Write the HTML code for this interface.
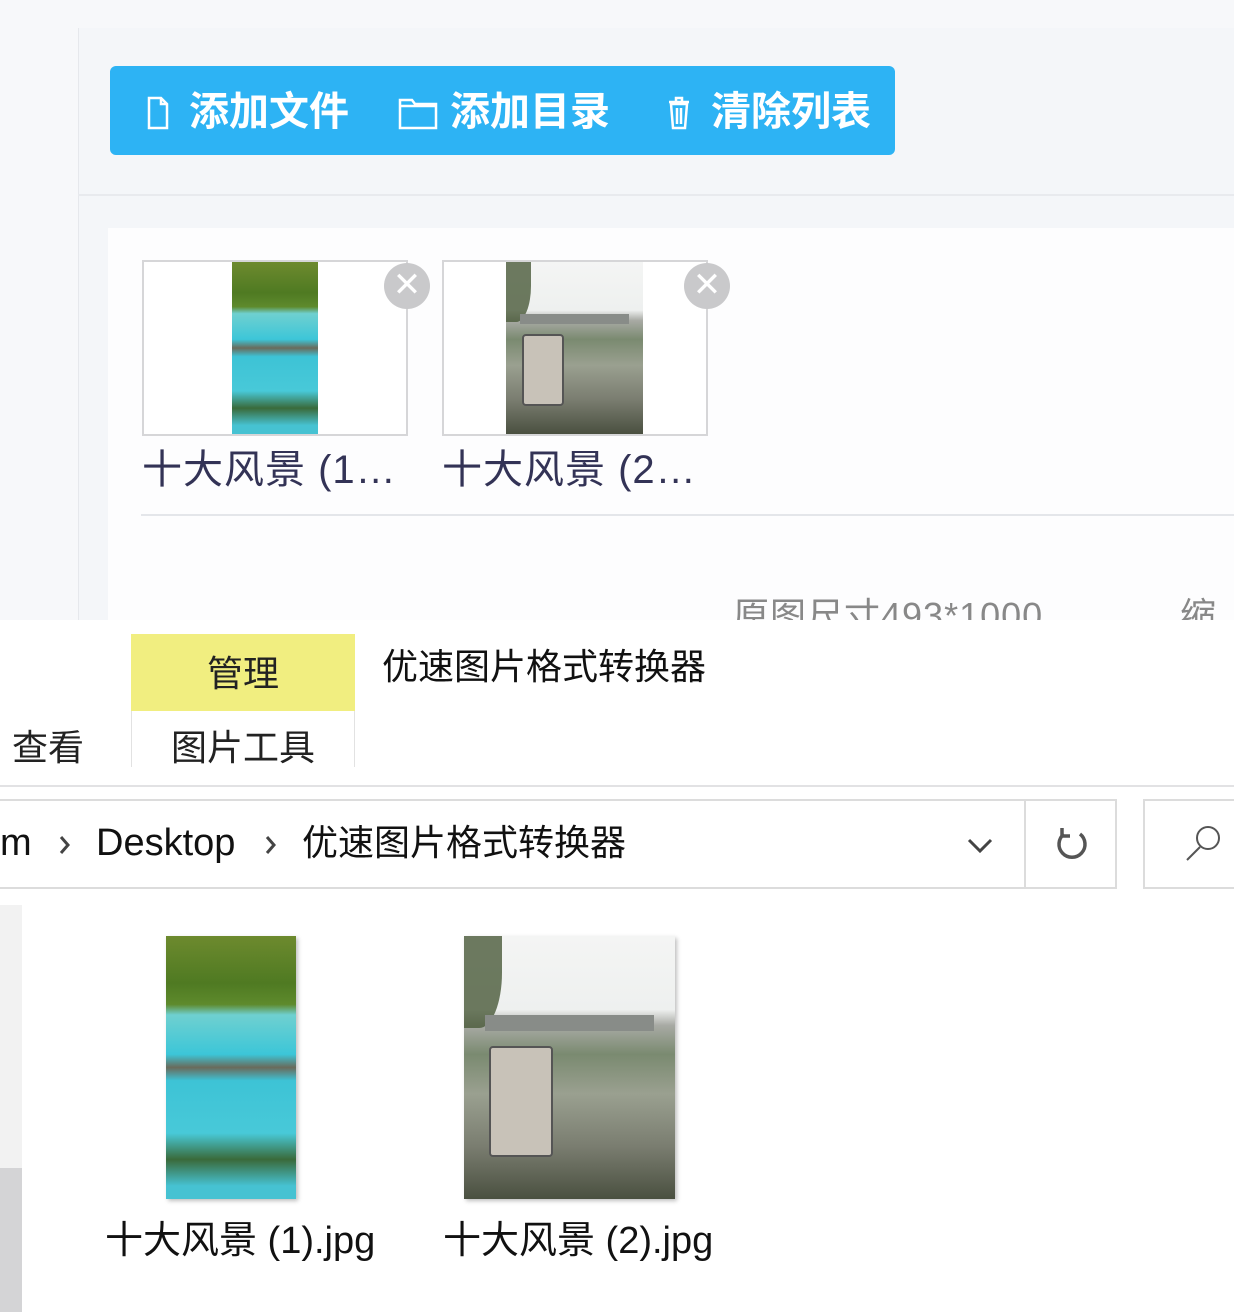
<!DOCTYPE html>
<html><head><meta charset="utf-8"><style>
*{margin:0;padding:0;box-sizing:border-box}
body{width:1234px;height:1312px;position:relative;overflow:hidden;background:#fff;font-family:"Liberation Sans","Noto Sans CJK SC",sans-serif}
.a{position:absolute}
.img1{background:linear-gradient(180deg,#6d8a2e 0%,#4f7a22 18%,#5e8a2c 26%,#6fd0d0 30%,#3cc6d8 45%,#6a6a5a 50%,#3dc3d6 55%,#48c9d8 75%,#3a6a3a 85%,#46c2d2 95%)}
.img2{background:linear-gradient(180deg,#f4f5f4 0%,#eef0ef 28%,#a8aaa4 34%,#7a8a70 45%,#9aa090 60%,#7a7d70 80%,#4a5040 100%);overflow:hidden}
.img2 .tab{position:absolute;left:12%;top:42%;width:30%;height:42%;background:#c8c2b8;border:2px solid #555;border-radius:4px}
.img2 .tree{position:absolute;left:0;top:0;width:18%;height:35%;background:#4a5a3a;border-radius:0 0 60% 0;opacity:.8}
.img2 .br{position:absolute;left:10%;top:30%;width:80%;height:6%;background:#888c88}
.t{white-space:nowrap;line-height:1}
</style></head><body>
<div class="a" style="left:0;top:0;width:1234px;height:620px;background:#f7f8fa"></div>
<div class="a" style="left:78px;top:28px;width:1156px;height:592px;background:#f4f6f9;border-left:1px solid #e6e8ec"></div>
<div class="a" style="left:78px;top:194px;width:1156px;height:2px;background:#e8eaee"></div>
<div class="a" style="left:110px;top:66px;width:785px;height:89px;background:#2db3f4;border-radius:6px"></div>
<svg class="a" style="left:146px;top:96px" width="24" height="34" viewBox="0 0 24 34"><path d="M3 2h12l6 6v24H3z M15 2v6h6" fill="none" stroke="#fff" stroke-width="2.5"/></svg>
<div class="a t" style="left:189px;top:92px;font-size:40px;color:#fff;font-weight:bold">添加文件</div>
<svg class="a" style="left:398px;top:98px" width="40" height="32" viewBox="0 0 40 32"><path d="M2 2h12l3 4h21v24H2z M2 8h36" fill="none" stroke="#fff" stroke-width="2.5"/></svg>
<div class="a t" style="left:450px;top:92px;font-size:40px;color:#fff;font-weight:bold">添加目录</div>
<svg class="a" style="left:667px;top:96px" width="24" height="34" viewBox="0 0 24 34"><path d="M2 6h20 M9 6V2h6v4 M4 8l2 24h12l2-24z M10 12v16 M14 12v16" fill="none" stroke="#fff" stroke-width="2.5"/></svg>
<div class="a t" style="left:711px;top:92px;font-size:40px;color:#fff;font-weight:bold">清除列表</div>
<div class="a" style="left:108px;top:228px;width:1126px;height:392px;background:#fdfdfe"></div>
<div class="a" style="left:142px;top:260px;width:266px;height:176px;background:#fff;border:2px solid #d6d6d8"></div>
<div class="a img1" style="left:232px;top:262px;width:86px;height:172px"></div>
<div class="a" style="left:442px;top:260px;width:266px;height:176px;background:#fff;border:2px solid #d6d6d8"></div>
<div class="a img2" style="left:506px;top:262px;width:137px;height:172px"><div class="tree"></div><div class="br"></div><div class="tab"></div></div>
<div class="a" style="left:384px;top:263px;width:46px;height:46px;border-radius:50%;background:#c9c9cb"></div>
<div class="a t" style="left:384px;top:268px;width:46px;text-align:center;font-size:34px;color:#fff">✕</div>
<div class="a" style="left:684px;top:263px;width:46px;height:46px;border-radius:50%;background:#c9c9cb"></div>
<div class="a t" style="left:684px;top:268px;width:46px;text-align:center;font-size:34px;color:#fff">✕</div>
<div class="a t" style="left:142px;top:450px;font-size:40px;color:#333356;letter-spacing:1px">十大风景 (1…</div>
<div class="a t" style="left:442px;top:450px;font-size:40px;color:#333356;letter-spacing:1px">十大风景 (2…</div>
<div class="a" style="left:141px;top:514px;width:1093px;height:2px;background:#e4e6ea"></div>
<div class="a" style="left:0;top:590px;width:1234px;height:30px;overflow:hidden"><div class="a t" style="left:733px;top:8px;font-size:36px;color:#888;letter-spacing:1px">原图尺寸493*1000</div><div class="a t" style="left:1180px;top:8px;font-size:36px;color:#888">缩</div></div>
<div class="a" style="left:0;top:620px;width:1234px;height:692px;background:#fff"></div>
<div class="a" style="left:131px;top:634px;width:224px;height:77px;background:#f1ee80"></div>
<div class="a t" style="left:131px;top:656px;width:224px;text-align:center;font-size:36px;color:#222">管理</div>
<div class="a t" style="left:382px;top:649px;font-size:36px;color:#111">优速图片格式转换器</div>
<div class="a" style="left:131px;top:711px;width:224px;height:56px;border-left:1px solid #e2e2e2;border-right:1px solid #e2e2e2"></div>
<div class="a t" style="left:12px;top:730px;font-size:36px;color:#222">查看</div>
<div class="a t" style="left:131px;top:730px;width:224px;text-align:center;font-size:36px;color:#222">图片工具</div>
<div class="a" style="left:0;top:785px;width:1234px;height:2px;background:#e2e2e4"></div>
<div class="a" style="left:-2px;top:799px;width:1119px;height:90px;border:2px solid #dcdcdc"></div>
<div class="a" style="left:1024px;top:800px;width:2px;height:88px;background:#dcdcdc"></div>
<div class="a" style="left:1143px;top:799px;width:100px;height:90px;border:2px solid #dcdcdc"></div>
<div class="a t" style="left:0;top:824px;font-size:38px;color:#111">m</div>
<svg class="a" style="left:58px;top:834px" width="14" height="22"><path d="M3 3l7 8-7 8" fill="none" stroke="#444" stroke-width="3"/></svg>
<div class="a t" style="left:96px;top:824px;font-size:38px;color:#111">Desktop</div>
<svg class="a" style="left:264px;top:834px" width="14" height="22"><path d="M3 3l7 8-7 8" fill="none" stroke="#444" stroke-width="3"/></svg>
<div class="a t" style="left:302px;top:825px;font-size:36px;color:#111">优速图片格式转换器</div>
<svg class="a" style="left:966px;top:836px" width="28" height="20"><path d="M3 4l11 11 11-11" fill="none" stroke="#444" stroke-width="3"/></svg>
<svg class="a" style="left:1052px;top:824px" width="40" height="42"><path d="M12 10A13 13 0 1 0 28 10 M10 4v8h8" fill="none" stroke="#555" stroke-width="3.5"/></svg>
<svg class="a" style="left:1182px;top:822px" width="42" height="42"><circle cx="26" cy="16" r="11" fill="none" stroke="#555" stroke-width="2"/><path d="M18 25L5 38" stroke="#555" stroke-width="2"/></svg>
<div class="a" style="left:0;top:905px;width:22px;height:407px;background:#f2f2f2"></div>
<div class="a" style="left:0;top:1168px;width:22px;height:144px;background:#d4d4d6"></div>
<div class="a img1" style="left:166px;top:936px;width:130px;height:263px;box-shadow:2px 2px 4px rgba(0,0,0,.25)"></div>
<div class="a img2" style="left:464px;top:936px;width:211px;height:263px;box-shadow:2px 2px 4px rgba(0,0,0,.25)"><div class="tree"></div><div class="br"></div><div class="tab"></div></div>
<div class="a t" style="left:105px;top:1222px;font-size:38px;color:#111">十大风景 (1).jpg</div>
<div class="a t" style="left:443px;top:1222px;font-size:38px;color:#111">十大风景 (2).jpg</div>
</body></html>
